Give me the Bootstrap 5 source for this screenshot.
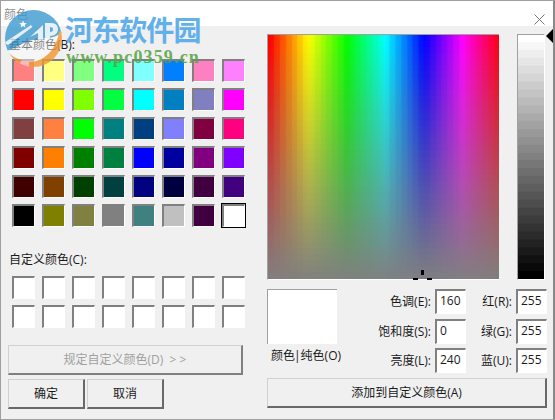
<!DOCTYPE html>
<html lang="zh">
<head>
<meta charset="utf-8">
<title>颜色</title>
<link rel="stylesheet" href="https://cdn.jsdelivr.net/npm/bootstrap@5.3.0/dist/css/bootstrap.min.css">
<style>
html,body{margin:0;height:100%;overflow:hidden;background:#f0f0f0}
body{font-family:"Open Sans","Noto Sans CJK SC",sans-serif;font-size:12px;line-height:16px;color:#1a1a1a}
.dlg{position:relative;width:555px;height:420px;background:#f0f0f0;border-top:1px solid #a0a0a0;border-left:1px solid #a0a0a0;border-right:2px solid #8a8a8a;border-bottom:1px solid #a0a0a0;overflow:hidden}
.ttl{height:25px;background:#fff;padding:6px 0 0 3px;color:#8f8f8f}
.cls{margin:7px 8px 0 0}
.colL{width:235px;margin-left:7px}
.colR{width:280px;margin-left:24px}
.lbl{height:16px;padding-left:1px}
.lb1{margin-top:11px}
.lb2{margin-top:25px}
.sg1{margin-top:6px}
.sg2{margin-top:8px}
.swg{display:grid;grid-template-columns:repeat(8,23px);column-gap:7px;row-gap:6px;padding-left:4px}
.sw{width:23px;height:23px;border-style:solid;border-width:2px 1px 1px 2px;border-color:#808080 #fff #fff #808080;background:var(--c)}
.sel{outline:1px solid #000}
.winbtn{--bs-btn-border-radius:0;background:#f0f0f0;border-width:1px 2px 2px 1px;border-style:solid;border-color:#d0d0d0 #696969 #696969 #d0d0d0;border-radius:0;padding:0;font-size:12px;line-height:16px;color:#1a1a1a;height:30px}
.winbtn:disabled{background:#f0f0f0;opacity:1;color:#a0a0a0;border-color:#d0d0d0 #808080 #808080 #d0d0d0}
.b77{width:77px}
.bt1{margin-top:17px}
.bt2{gap:2px;margin-top:4px}
.bt3{margin-top:5px}
.rtop{margin-top:8px}
.spc{position:relative;height:246px;width:232px}
.spc canvas{display:block;width:232px;height:246px;border-style:solid;border-width:1px 0 1px 1px;border-color:#a0a0a0 #fff #fff #a0a0a0}
.lum{display:block;width:28px;height:246px;margin-left:18px;border-style:solid;border-width:1px;border-color:#a0a0a0 #fff #fff #a0a0a0}
.arw{position:absolute;left:545px;top:27px}
.cross{position:absolute;left:146px;top:236px}
.pvr{margin-top:9px}
.pvw{width:70px;height:55px;background:#fff;border-style:solid;border-width:1px 0 0 1px;border-color:#a0a0a0}
.pvc{width:70px;flex:none}
.pvl{margin:4px 0 0 4px}
.bar{letter-spacing:-2px;margin:0 2px 0 -1px}
.frm{display:grid;grid-template-columns:94px 31px 42px 31px;column-gap:4px;grid-auto-rows:25px;row-gap:4.5px}
.frm label{text-align:right;line-height:25px;white-space:nowrap}
.fld{border-radius:0;border-style:solid;border-width:2px 1px 1px 2px;border-color:#808080 #fff #fff #808080;padding:0 0 3px 3px;font-size:12px;line-height:16px;color:#1a1a1a;background:#fff;height:25px;min-height:0}
.wm{position:absolute;left:-1px;top:-1px;width:210px;height:75px;pointer-events:none}
.wml{opacity:.8}
.wmc{position:absolute;left:65px;top:9px;font-family:"Noto Sans CJK SC",sans-serif;font-weight:700;font-size:28px;line-height:40px;letter-spacing:-.9px;color:#55abea;opacity:.92;white-space:nowrap}
.wmu{position:absolute;left:66px;top:47px;font-family:"Liberation Serif",serif;font-weight:700;font-size:18px;line-height:20px;letter-spacing:1.15px;color:#5aa548;opacity:.88;white-space:nowrap}
</style>
</head>
<body>
<div class="dlg d-flex flex-column">
  <div class="ttl d-flex justify-content-between">
    <span>颜色</span>
    <svg class="cls" width="11" height="11" viewBox="0 0 11 11"><path d="M.5.5l10 10M10.5.5l-10 10" stroke="#777" fill="none"/></svg>
  </div>
  <div class="d-flex">
    <div class="colL d-flex flex-column">
      <div class="lbl lb1">基本颜色(B):</div>
      <div class="swg sg1" id="basic"></div>
      <div class="lbl lb2">自定义颜色(C):</div>
      <div class="swg sg2" id="cust"></div>
      <button class="btn winbtn w-100 bt1" disabled>规定自定义颜色(D)&nbsp; &gt; &gt;</button>
      <div class="d-flex bt2">
        <button class="btn winbtn b77">确定</button>
        <button class="btn winbtn b77">取消</button>
      </div>
    </div>
    <div class="colR d-flex flex-column rtop">
      <div class="d-flex">
        <div class="spc">
          <canvas id="sp" width="232" height="246"></canvas>
          <svg class="cross" width="20" height="12" viewBox="0 0 20 12"><path d="M8 0h3v5H8zM0 8h5v2H0zM14 8h5v2h-5z" fill="#000"/></svg>
        </div>
        <canvas class="lum" id="lm" width="28" height="246"></canvas>
      </div>
      <div class="d-flex pvr">
        <div class="pvc d-flex flex-column">
          <div class="pvw"></div>
          <div class="text-nowrap pvl">颜色<span class="bar">|</span>纯色(O)</div>
        </div>
        <div class="frm">
          <label>色调(E):</label><input class="form-control fld" value="160">
          <label>红(R):</label><input class="form-control fld" value="255">
          <label>饱和度(S):</label><input class="form-control fld" value="0">
          <label>绿(G):</label><input class="form-control fld" value="255">
          <label>亮度(L):</label><input class="form-control fld" value="240">
          <label>蓝(U):</label><input class="form-control fld" value="255">
        </div>
      </div>
      <button class="btn winbtn bt3">添加到自定义颜色(A)</button>
    </div>
  </div>
  <svg class="arw" width="8" height="16" viewBox="0 0 8 16"><path d="M0 8L8 0v16z" fill="#000"/></svg>
  <div class="wm">
    <svg class="wml" width="70" height="75" viewBox="0 0 70 75">
      <defs><clipPath id="ci"><circle cx="33.500" cy="38.500" r="28.500"/></clipPath></defs>
      <g clip-path="url(#ci)">
        <rect width="70" height="75" fill="#fff" opacity=".55"/>
        <path d="M0 0H70V28L58 35C50 40 38 37 26 42L10 50 0 52z" fill="#3d9ad0"/>
        <path d="M4 43L31 25 32.500 27 8 45z" fill="#fff" opacity=".85"/>
        <path d="M2 44C8 54 14 58 22 60L15 70H0z" fill="#f0972f"/>
        <path d="M29 62C44 62 56 50 59 32L70 26V75H29z" fill="#f0972f"/>
      </g>
      <path d="M23 20.500l1 2.500 2.700.2-2 1.700.6 2.600-2.300-1.400-2.300 1.400.6-2.600-2-1.700 2.700-.2z" fill="#fff"/>
      <path d="M30 37L43 25V40H38V33z" fill="#fff" opacity=".85"/>
      <path d="M45 23h6c5 0 7 3 7 6 0 4-3 7-8 7v4h-5zM50 27v5c2 0 3-1 3-2.500s-1-2.500-3-2.500z" fill="#fff" fill-rule="evenodd" opacity=".85"/>
    </svg>
    <div class="wmc">河东软件园</div>
    <div class="wmu">www.pc0359.cn</div>
  </div>
</div>
<script>
const b="FF8080 FFFF80 80FF80 00FF80 80FFFF 0080FF FF80C0 FF80FF FF0000 FFFF00 80FF00 00FF40 00FFFF 0080C0 8080C0 FF00FF 804040 FF8040 00FF00 008080 004080 8080FF 800040 FF0080 800000 FF8000 008000 008040 0000FF 0000A0 800080 8000FF 400000 804000 004000 004040 000080 000040 400040 400080 000000 808000 808040 808080 408080 C0C0C0 400040 FFFFFF".split(" ");
const add=(id,c,sel)=>{const d=document.createElement("div");d.className="sw"+(sel?" sel":"");d.style.setProperty("--c",c);document.getElementById(id).appendChild(d)};
b.forEach((c,i)=>add("basic","#"+c,i==47));
for(let i=0;i<16;i++)add("cust","#fff");
const sp=document.getElementById("sp"),x=sp.getContext("2d");
const W=sp.width,H=sp.height,n=40,cw=W/n,ch=H/n;
for(let px=0;px<W;px++){
  const band=Math.floor(px/cw)*360/n,smooth=px*360/W,hue=band*.55+smooth*.45;
  for(let j=0;j<n;j++){
    x.fillStyle="hsl("+hue+","+(100-j*100/n)+"%,50%)";
    x.fillRect(px,Math.floor(j*ch),1,Math.ceil(ch));
  }
}
const lm=document.getElementById("lm"),y=lm.getContext("2d"),m=31;
for(let j=0;j<m;j++){const v=Math.round(255-j*255/(m-1));y.fillStyle="rgb("+v+","+v+","+v+")";y.fillRect(0,Math.floor(j*246/m),28,9)}
</script>
</body>
</html>
